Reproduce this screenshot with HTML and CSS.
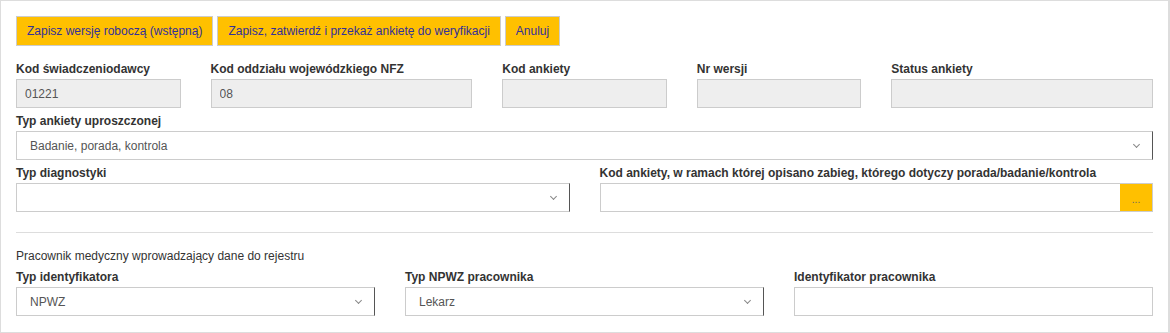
FILE: index.html
```html
<!DOCTYPE html>
<html lang="pl">
  <head>
    <meta charset="UTF-8" />
    <meta name="viewport" content="width=device-width, initial-scale=1.0" />
    <title>Ankieta uproszczona</title>
    <link rel="stylesheet" href="styles.css">
  </head>
  <body>
    <div class="panel">
      <div class="toolbar">
        <button class="btn-yellow">Zapisz wersję roboczą (wstępną)</button>
        <button class="btn-yellow">Zapisz, zatwierdź i przekaż ankietę do weryfikacji</button>
        <button class="btn-yellow">Anuluj</button>
      </div>

      <div class="row">
        <div class="col col-2 form-group">
          <label>Kod świadczeniodawcy</label>
          <input class="form-control" type="text" value="01221" readonly />
        </div>
        <div class="col col-3 form-group">
          <label>Kod oddziału wojewódzkiego NFZ</label>
          <input class="form-control" type="text" value="08" readonly />
        </div>
        <div class="col col-2 form-group">
          <label>Kod ankiety</label>
          <input class="form-control" type="text" readonly />
        </div>
        <div class="col col-2 form-group">
          <label>Nr wersji</label>
          <input class="form-control" type="text" readonly />
        </div>
        <div class="col col-3 form-group">
          <label>Status ankiety</label>
          <input class="form-control" type="text" readonly />
        </div>
      </div>

      <div class="form-group">
        <label>Typ ankiety uproszczonej</label>
        <div class="select-wrap">
          <select class="form-control">
            <option>Badanie, porada, kontrola</option>
          </select>
        </div>
      </div>

      <div class="row">
        <div class="col col-6 form-group">
          <label>Typ diagnostyki</label>
          <div class="select-wrap">
            <select class="form-control">
              <option></option>
            </select>
          </div>
        </div>
        <div class="col col-6 form-group">
          <label>Kod ankiety, w ramach której opisano zabieg, którego dotyczy porada/badanie/kontrola</label>
          <div class="input-group">
            <input class="form-control editable" type="text" />
            <button class="btn-pick">...</button>
          </div>
        </div>
      </div>

      <hr class="divider" />

      <p class="section-title">Pracownik medyczny wprowadzający dane do rejestru</p>

      <div class="row">
        <div class="col col-4 form-group">
          <label>Typ identyfikatora</label>
          <div class="select-wrap">
            <select class="form-control">
              <option>NPWZ</option>
            </select>
          </div>
        </div>
        <div class="col col-4 form-group">
          <label>Typ NPWZ pracownika</label>
          <div class="select-wrap">
            <select class="form-control">
              <option>Lekarz</option>
            </select>
          </div>
        </div>
        <div class="col col-4 form-group">
          <label>Identyfikator pracownika</label>
          <input class="form-control editable" type="text" />
        </div>
      </div>
    </div>
  </body>
</html>
```

FILE: styles.css
```css
/* General */
* {
  box-sizing: border-box;
}

body {
  margin: 0;
  font-family: "Liberation Sans", Arial, sans-serif;
  font-size: 12px;
  color: #333;
  background: #fff;
}

/* Panel */
.panel {
  width: 1170px;
  height: 333px;
  border: 1px solid #ddd;
  border-right-width: 2px;
  padding: 15px 15px 15px 15px;
}

/* Buttons on top */
.toolbar {
  display: flex;
  gap: 4px;
  margin-bottom: 16px;
}

.btn-yellow {
  height: 30px;
  padding: 0 10px;
  background-color: #ffc000;
  border: 1px solid #ccc;
  color: #33309a;
  font-family: inherit;
  font-size: 12px;
  cursor: pointer;
}

.btn-yellow:hover {
  background-color: #f0b400;
}

/* Grid */
.row {
  display: flex;
  margin: 0 -15px;
}

.col {
  padding: 0 15px;
}

.col-2 { width: 16.6667%; }
.col-3 { width: 25%; }
.col-4 { width: 33.3333%; }
.col-6 { width: 50%; }

/* Form */
.form-group {
  margin-bottom: 6px;
}

label {
  display: block;
  font-weight: bold;
  line-height: 14px;
  margin-bottom: 3px;
  color: #333;
  white-space: nowrap;
}

.form-control {
  display: block;
  width: 100%;
  height: 29px;
  padding: 0 8px;
  border: 1px solid #ccc;
  background-color: #eee;
  font-family: inherit;
  font-size: 12px;
  color: #555;
  outline: none;
}

.form-control.editable {
  background-color: #fff;
}

select.form-control {
  appearance: none;
  -webkit-appearance: none;
  background-color: #fff;
  border-right-color: #555;
  padding-left: 13px;
  color: #555;
}

.select-wrap {
  position: relative;
}

/* chevron */
.select-wrap::after {
  content: "";
  position: absolute;
  right: 14px;
  top: 11px;
  width: 4px;
  height: 4px;
  border-right: 1px solid #888;
  border-bottom: 1px solid #888;
  transform: rotate(45deg);
  pointer-events: none;
}

.input-group {
  display: flex;
}

.input-group .form-control {
  flex: 1;
  border-right: none;
}

.btn-pick {
  width: 33px;
  height: 29px;
  border: 1px solid #ccc;
  border-left: none;
  background-color: #ffc000;
  color: #666;
  font-size: 10px;
  padding: 4px 0 0;
}

/* Divider and section */
.divider {
  border: none;
  border-top: 1px solid #ddd;
  margin: 14px 0 16px;
}

.section-title {
  margin: 0 0 7px;
  line-height: 14px;
}
```
